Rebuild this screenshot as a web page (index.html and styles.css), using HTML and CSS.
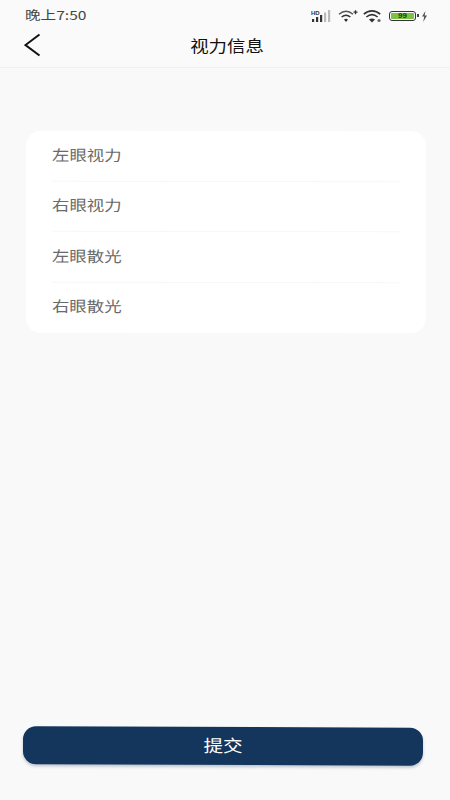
FILE: index.html
```html
<!DOCTYPE html>
<html lang="zh">
<head>
<meta charset="utf-8">
<title>视力信息</title>
<link rel="stylesheet" href="styles.css">
</head>
<body>
<div class="page">
  <header class="top">
    <div class="status">
      <span class="time">晚上7:50</span>
      <div class="status-icons">
        <svg class="ic-signal" width="21" height="14" viewBox="0 0 21 14">
          <text x="0" y="5.6" class="hd">HD</text>
          <rect x="1" y="10" width="2.2" height="3" fill="#333"/>
          <rect x="5" y="8" width="2.2" height="5" fill="#333"/>
          <rect x="9" y="6" width="2.2" height="7" fill="#333"/>
          <rect x="13" y="3.5" width="2.2" height="9.5" fill="#bbb"/>
          <rect x="17" y="1" width="2.2" height="12" fill="#bbb"/>
        </svg>
        <svg class="ic-wifi1" width="20" height="14" viewBox="0 0 20 14" fill="none">
          <path d="M1 5.2C5.5 1.4 10.5 1.4 15 5.2" stroke="#555" stroke-width="1.5"/>
          <path d="M3.6 8C6.6 5.6 9.4 5.6 12.4 8" stroke="#333" stroke-width="1.5"/>
          <path d="M6 10.6C7.4 9.6 8.6 9.6 10 10.6L8 13Z" fill="#333"/>
          <path d="M15.5 3.2h4M17.5 1.2v4" stroke="#333" stroke-width="1.3"/>
        </svg>
        <svg class="ic-wifi2" width="20" height="14" viewBox="0 0 20 14" fill="none">
          <path d="M0.8 5.2C5.8 0.8 12.2 0.8 17.2 5.2" stroke="#333" stroke-width="1.6"/>
          <path d="M3.4 8C7 5 11 5 14.6 8" stroke="#333" stroke-width="1.6"/>
          <path d="M6 10.6C8 9.2 10 9.2 12 10.6L9 13.6Z" fill="#333"/>
          <circle cx="16" cy="11.5" r="1.6" fill="#666"/>
        </svg>
        <span class="battery"><span class="level">99</span></span>
        <svg class="ic-bolt" width="7" height="11" viewBox="0 0 7 11"><path d="M4.4 0 1 5.6h2.2L2.2 11 6 4.6H3.7Z" fill="#555"/></svg>
      </div>
    </div>
    <div class="nav">
      <svg class="back" width="18" height="24" viewBox="0 0 18 24" fill="none"><path d="M15.5 1.5 1.5 12 15.5 22.5" stroke="#111" stroke-width="2"/></svg>
      <h1 class="title"><span class="wide-center">视力信息</span></h1>
    </div>
  </header>

  <main class="content">
    <section class="card">
      <div class="row"><span class="wide">左眼视力</span></div>
      <div class="row"><span class="wide">右眼视力</span></div>
      <div class="row"><span class="wide">左眼散光</span></div>
      <div class="row"><span class="wide">右眼散光</span></div>
    </section>
  </main>

  <div class="footer">
    <button class="submit" type="button"><span class="wide-center">提交</span></button>
  </div>
</div>
</body>
</html>
```
FILE: styles.css
```css
* { box-sizing: border-box; }
html, body { margin: 0; padding: 0; }
body {
  width: 450px;
  height: 800px;
  overflow: hidden;
  background: #f9f9f9;
  font-family: "Noto Sans CJK SC", "Noto Sans", sans-serif;
}
.page {
  display: flex;
  flex-direction: column;
  height: 800px;
}
.top {
  height: 68px;
  flex: none;
  background: #fafafa;
  border-bottom: 1px solid #f0f0f0;
}
.status {
  display: flex;
  align-items: center;
  justify-content: space-between;
  height: 30px;
  padding: 0 22px 0 25px;
}
.time {
  display: inline-block;
  font-size: 12px;
  line-height: 30px;
  color: #444;
  font-family: "Noto Sans CJK SC", sans-serif;
  transform: scaleX(1.3);
  transform-origin: left center;
}
.status-icons {
  display: flex;
  align-items: center;
  gap: 6px;
  padding-top: 2px;
}
.hd { font: 700 6px "Liberation Sans", sans-serif; fill: #333; }
.ic-wifi2 { margin-left: -1px; }
.battery {
  position: relative;
  display: flex;
  align-items: center;
  justify-content: center;
  width: 27px;
  height: 10px;
  border: 1.5px solid #333;
  border-radius: 3px;
  padding: 1px;
  margin-right: -1px;
}
.battery::after {
  content: "";
  position: absolute;
  right: -4px;
  top: 2px;
  width: 2px;
  height: 3px;
  background: #444;
}
.level {
  flex: 1;
  height: 100%;
  background: #7dc242;
  border-radius: 1px;
  color: #1f3d12;
  font: 700 8px/5px "Liberation Sans", sans-serif;
  text-align: center;
}
.nav {
  display: flex;
  align-items: center;
  height: 30px;
  padding-left: 24px;
  position: relative;
}
.title {
  position: absolute;
  left: 0;
  right: 0;
  top: 0;
  margin: 0;
  text-align: center;
  font-size: 16px;
  line-height: 30px;
  font-weight: 400;
  color: #111;
  padding-left: 5px;
}
.wide-center {
  display: inline-block;
  transform: scaleX(1.15);
}
.content {
  flex: 1;
  padding: 63px 24px 0 26px;
}
.card {
  background: #fff;
  border-radius: 15px;
  padding: 0 26px;
  transform: rotate(0.05deg);
}
.row {
  height: 50.5px;
  display: flex;
  align-items: center;
  font-size: 15px;
  color: #6a6a6a;
  padding: 0 0 3px 0;
  border-bottom: 1px solid #f7f7f7;
}
.row:last-child { border-bottom: 0; padding-bottom: 4px; }
.wide {
  display: inline-block;
  transform: scaleX(1.16);
  transform-origin: left center;
}
.footer {
  flex: none;
  padding: 0 27px 35px 23px;
}
.submit {
  display: block;
  width: 100%;
  height: 38px;
  border: 0;
  border-radius: 13px;
  padding: 0 0 3px;
  background: #14355c;
  color: #fff;
  font-family: inherit;
  font-size: 17px;
  font-weight: 400;
  box-shadow: 0 2px 3px rgba(20, 53, 92, 0.25);
  transform: rotate(0.2deg);
}
```
